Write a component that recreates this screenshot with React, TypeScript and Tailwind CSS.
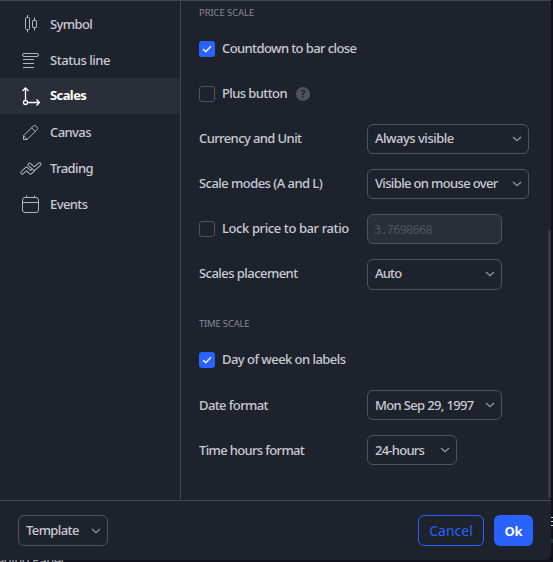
import React from "react";

function Label({ children, className = "" }: { children: React.ReactNode; className?: string }) {
  return <span className={`whitespace-nowrap ${className}`}>{children}</span>;
}

function Chevron() {
  return (
    <svg width="10" height="6" viewBox="0 0 10 6" fill="none" stroke="#9598a1" strokeWidth="1.2" className="shrink-0">
      <path d="M1 1l4 3.7L9 1" />
    </svg>
  );
}

function Select({ text, className = "h-[30px]", textClass = "" }: { text: string; className?: string; textClass?: string }) {
  return (
    <button className={`flex items-center justify-between rounded-md border border-[#50535e] pl-[7px] pr-[6px] ${className}`}>
      <Label className={textClass}>{text}</Label>
      <Chevron />
    </button>
  );
}

function Check({ on = false }: { on?: boolean }) {
  return on ? (
    <span className="flex size-4 shrink-0 items-center justify-center rounded-[3px] bg-[#2962ff]">
      <svg width="16" height="16" viewBox="0 0 16 16" fill="none" stroke="#e4e9f8" strokeWidth="1.5">
        <path d="M4 8.100l2.800 2.500L12 5.300" />
      </svg>
    </span>
  ) : (
    <span className="size-4 shrink-0 rounded-[3px] border border-[#50535e]" />
  );
}

function Row({ label, control }: { label: React.ReactNode; control?: React.ReactNode }) {
  return (
    <div className="flex h-[45px] items-center">
      <div className="flex w-[168px] shrink-0 items-center gap-[7px]">{label}</div>
      {control}
    </div>
  );
}

const tradeUp = "M3.3 18.600L7.500 14.700L11.500 18.600L14 16.200";
const tradeDown = "M10.500 10.500L15.300 14.800L20.500 10.300";

const icons = {
  symbol: (
    <>
      <rect x="6.5" y="7.5" width="4" height="12" rx="1" />
      <path d="M8.5 5v2.5M8.5 19.5v3" />
      <rect x="13.5" y="10.5" width="4" height="7" rx=".5" />
      <path d="M15.5 7.5v3M15.5 17.5v3" />
    </>
  ),
  status: (
    <>
      <rect x="3.5" y="7.5" width="16" height="3" rx="1.5" />
      <path d="M4 13.500h11M4 17.500h11M4 21.500h11" />
    </>
  ),
  scales: (
    <g stroke="#fff" strokeWidth="1.3">
      <circle cx="6.5" cy="20.5" r="2" />
      <path d="M6.500 18.500V6.500M3.500 9l3-3 3 3M8.500 20.500h12M17.500 17.500l3 3-3 3" />
    </g>
  ),
  canvas: (
    <path d="M4.500 21.500V17.800L14.300 8q1.300-1.300 2.600 0l1.100 1.100q1.300 1.300 0 2.600L8.200 21.500zM12.500 9.800l3.700 3.700M4.500 17.800l3.700 3.700" />
  ),
  trading: (
    <g strokeLinecap="round" strokeLinejoin="round">
      <path d={tradeUp} strokeWidth="4" />
      <path d={tradeUp} strokeWidth="2" stroke="#1e222d" />
      <path d={tradeDown} strokeWidth="4" />
      <path d={tradeDown} strokeWidth="2" stroke="#1e222d" />
    </g>
  ),
  events: (
    <>
      <rect x="3.5" y="7.5" width="16" height="15" rx="2.5" />
      <path d="M3.500 12.500h16M7.500 5.500v2M15.500 5.500v2" />
    </>
  ),
};

const nav: [string, React.ReactNode, string, string][] = [
  ["Symbol", icons.symbol, "", ""],
  ["Status line", icons.status, "", "tracking-[-0.45px]"],
  ["Scales", icons.scales, "bg-[#2a2e39] text-white font-bold", "pb-[2px]"],
  ["Canvas", icons.canvas, "", ""],
  ["Trading", icons.trading, "", ""],
  ["Events", icons.events, "", ""],
];

export default function App() {
  return (
    <div className="relative h-[562px] w-[553px] overflow-hidden bg-[#0f121d] font-['Noto_Sans','Liberation_Sans',sans-serif] text-[13px] font-medium leading-[18px] tracking-[-0.6px] text-[#c9cbd3]">
      <div className="absolute right-0 top-[517px] h-[5px] w-[2px] border-y border-[#d1d4dc]" />
      <div className="absolute right-0 top-[525px] h-px w-[2px] bg-[#d1d4dc]" />
      <div className="absolute right-0 top-[539px] h-1 w-[2px] bg-[#2a2e39]" />
      <div className="absolute left-[-12px] top-[551px] text-[#9598a1]">trading Panel</div>
      <div className="relative flex h-[560px] w-[551px] flex-col rounded-br-md border-t border-[#434651] bg-[#1e222d]">
        <div className="flex h-[499px]">
          <nav className="w-[181px] shrink-0 border-r border-[#434651] pt-[5px]">
            {nav.map(([name, icon, cls, labelCls]) => (
              <div key={name} className={`flex h-9 items-center gap-[7px] pl-[19px] ${cls}`}>
                <svg width="24" height="28" viewBox="0 0 24 28" fill="none" stroke="#b2b5be" strokeWidth="1" className="shrink-0">{icon}</svg>
                <Label className={labelCls}>{name}</Label>
              </div>
            ))}
          </nav>
          <main className="relative flex-1 pl-[18px] pt-[3px]">
            <h2 className="h-[22.5px] text-[9.5px] font-normal tracking-[-0.1px] text-[#868993]">PRICE SCALE</h2>
            <Row label={<><Check on /><Label className="pb-[2px]">Countdown to bar close</Label></>} />
            <Row label={<><Check /><Label className="pb-[2px]">Plus button</Label><span className="ml-[2px] flex size-[14px] items-center justify-center rounded-full bg-[#50535e] text-[11px] font-bold tracking-normal text-[#1e222d]">?</span></>} />
            <Row label={<Label className="pb-[2px]">Currency and Unit</Label>} control={<Select text="Always visible" className="h-[30px] w-[162px]" textClass="pb-[2px] tracking-[-0.5px]" />} />
            <Row label={<Label className="pb-[2px] tracking-[-0.55px]">Scale modes (A and L)</Label>} control={<Select text="Visible on mouse over" className="h-[30px] w-[162px]" textClass="pb-[2px] tracking-[-0.65px]" />} />
            <Row
              label={<><Check /><Label className="pb-[2px] tracking-[-0.4px]">Lock price to bar ratio</Label></>}
              control={<div className="flex h-[30px] w-[135px] items-center rounded-md border border-[#50535e] bg-[#2a2e39] pl-[6px] pt-px font-['DejaVu_Sans_Mono',monospace] text-[12px] font-normal tracking-[-0.8px] text-[#50535e]">3.7698668</div>}
            />
            <Row label={<Label className="pb-[2px] tracking-[-0.55px]">Scales placement</Label>} control={<Select text="Auto" className="h-[31px] w-[135px]" textClass="pb-[2px] tracking-[-0.8px]" />} />
            <h2 className="h-[41px] pt-[18px] text-[9.5px] font-normal tracking-[-0.2px] text-[#868993]">TIME SCALE</h2>
            <Row label={<><Check on /><Label className="pb-[2px] tracking-[-0.55px]">Day of week on labels</Label></>} />
            <Row label={<Label>Date format</Label>} control={<Select text="Mon Sep 29, 1997" className="h-[30px] w-[135px]" textClass="tracking-[-0.65px]" />} />
            <Row label={<Label className="tracking-[-0.65px]">Time hours format</Label>} control={<Select text="24-hours" className="h-[30px] w-[90px]" textClass="tracking-[-0.75px]" />} />
            <div className="absolute right-0 top-[229px] h-[268px] w-[3px] rounded-sm bg-[#363a45]" />
          </main>
        </div>
        <footer className="flex flex-1 items-center border-t border-[#434651] px-[18px]">
          <Select text="Template" className="h-[31px] w-[90px]" textClass="pb-px" />
          <button className="ml-auto h-[31px] w-[66px] rounded-md border border-[#2962ff] text-[14px] font-normal tracking-normal text-[#2962ff]">Cancel</button>
          <button className="ml-[10px] h-[31px] w-[39px] rounded-md bg-[#2962ff] font-bold tracking-[-0.2px] text-white">Ok</button>
        </footer>
      </div>
    </div>
  );
}
